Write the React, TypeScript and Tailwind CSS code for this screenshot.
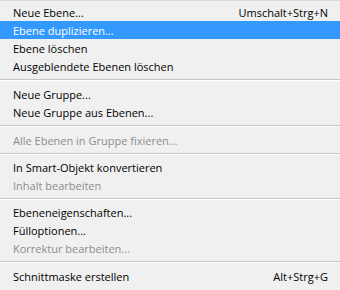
type Item =
  | { type: 'item'; label: string; shortcut?: string; disabled?: boolean; active?: boolean }
  | { type: 'sep'; h: string };

const items: Item[] = [
  { type: 'item', label: 'Neue Ebene...', shortcut: 'Umschalt+Strg+N' },
  { type: 'item', label: 'Ebene duplizieren...', active: true },
  { type: 'item', label: 'Ebene löschen' },
  { type: 'item', label: 'Ausgeblendete Ebenen löschen' },
  { type: 'sep', h: 'h-[10px]' },
  { type: 'item', label: 'Neue Gruppe...' },
  { type: 'item', label: 'Neue Gruppe aus Ebenen...' },
  { type: 'sep', h: 'h-[10px]' },
  { type: 'item', label: 'Alle Ebenen in Gruppe fixieren...', disabled: true },
  { type: 'sep', h: 'h-[9px]' },
  { type: 'item', label: 'In Smart-Objekt konvertieren' },
  { type: 'item', label: 'Inhalt bearbeiten', disabled: true },
  { type: 'sep', h: 'h-[9px]' },
  { type: 'item', label: 'Ebeneneigenschaften...' },
  { type: 'item', label: 'Fülloptionen...' },
  { type: 'item', label: 'Korrektur bearbeiten...', disabled: true },
  { type: 'sep', h: 'h-[10px]' },
  { type: 'item', label: 'Schnittmaske erstellen', shortcut: 'Alt+Strg+G' },
];

export default function App() {
  return (
    <div
      className="w-[340px] h-[290px] overflow-hidden bg-[#f0f0f0] border-t border-[#dadada] pt-[2px] text-[11px] text-[#000]"
      style={{ fontFamily: '"Open Sans", "Noto Sans", sans-serif' }}
    >
      {items.map((it, i) =>
        it.type === 'sep' ? (
          <div key={i} className={`${it.h} flex flex-col justify-center`}>
            <div className="h-px bg-[#c5c5c5]" />
            <div className="h-px bg-white" />
          </div>
        ) : (
          <div
            key={i}
            className={`h-[18px] flex items-center justify-between pl-[13px] pr-[12px] leading-none ${
              it.active ? 'bg-[#3399ff] text-white' : it.disabled ? 'text-[#8d8d8d]' : ''
            }`}
          >
            <span>{it.label}</span>
            {it.shortcut && <span>{it.shortcut}</span>}
          </div>
        )
      )}
    </div>
  );
}
